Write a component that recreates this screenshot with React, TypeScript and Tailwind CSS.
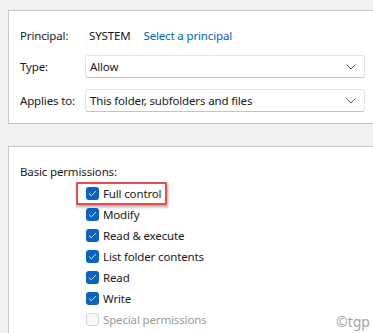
import React from "react";

const perms = [
  { label: "Full control", checked: true },
  { label: "Modify", checked: true },
  { label: "Read & execute", checked: true },
  { label: "List folder contents", checked: true },
  { label: "Read", checked: true },
  { label: "Write", checked: true },
  { label: "Special permissions", checked: false },
];

function Chevron() {
  return (
    <svg width="10" height="6" viewBox="0 0 10 6" className="text-[#5a5a5a]">
      <path d="M0.5 0.5 L5 5 L9.5 0.5" fill="none" stroke="currentColor" strokeWidth="1" />
    </svg>
  );
}

function Select({ value }: { value: string }) {
  return (
    <div className="flex h-[23px] flex-1 items-center justify-between rounded-[3px] border border-[#e3e3e3] border-b-[#c4c4c4] bg-white pl-[4px] pr-[8px]">
      <span>{value}</span>
      <Chevron />
    </div>
  );
}

function Checkbox({ checked }: { checked: boolean }) {
  if (!checked) {
    return <div className="h-[13px] w-[13px] rounded-[3px] border border-[#d6d6d6] bg-[#f7f7f7]" />;
  }
  return (
    <div className="flex h-[13px] w-[13px] items-center justify-center rounded-[3px] bg-[#0a63c2]">
      <svg width="9" height="7" viewBox="0 0 9 7">
        <path d="M1 3.6 L3.3 5.8 L8 1" fill="none" stroke="#cfe2f6" strokeWidth="1" />
      </svg>
    </div>
  );
}

export default function App() {
  return (
    <div
      className="relative h-[333px] w-[373px] overflow-hidden bg-[#f0f0f0] pl-[8px] pt-[10px] text-[11.5px] tracking-[-0.15px] text-[#1a1a1a]"
      style={{ fontFamily: '"Noto Sans", "Open Sans", sans-serif' }}
    >
      {/* top panel */}
      <div className="h-[114px] border-b border-l border-t border-[#c6c6c6] bg-white pl-[11px] pr-[8px] pt-[16px]">
        <div className="flex h-[18px] items-center">
          <span className="w-[69px]">Principal:</span>
          <span>SYSTEM</span>
          <span className="ml-[13px] text-[#0063c4]">Select a principal</span>
        </div>
        <div className="mt-[10px] flex items-center">
          <span className="w-[65px]">Type:</span>
          <Select value="Allow" />
        </div>
        <div className="mt-[11px] flex items-center">
          <span className="w-[65px]">Applies to:</span>
          <Select value="This folder, subfolders and files" />
        </div>
      </div>

      {/* bottom panel */}
      <div className="mt-[22px] h-[200px] border-l border-t border-[#c6c6c6] bg-white pl-[11px] pt-[16px]">
        <div className="h-[18px] leading-[18px]">Basic permissions:</div>
        <div className="mt-[2px] flex flex-col pl-[66px]">
          {perms.map((p) => (
            <div key={p.label} className="flex h-[21px] items-center gap-[4px]">
              <Checkbox checked={p.checked} />
              <span className={p.checked ? "" : "text-[#9b9b9b]"}>{p.label}</span>
            </div>
          ))}
        </div>
      </div>

      {/* highlight */}
      <div className="absolute left-[76px] top-[182px] h-[23px] w-[91px] rounded-[1px] border-2 border-[#ec4a4f] shadow-[1px_2px_3px_rgba(0,0,0,0.35)]" />

      {/* watermark */}
      <div className="absolute left-[336px] top-[311px] text-[14px] tracking-normal text-[#a6a6a6]">©tgp</div>
    </div>
  );
}
